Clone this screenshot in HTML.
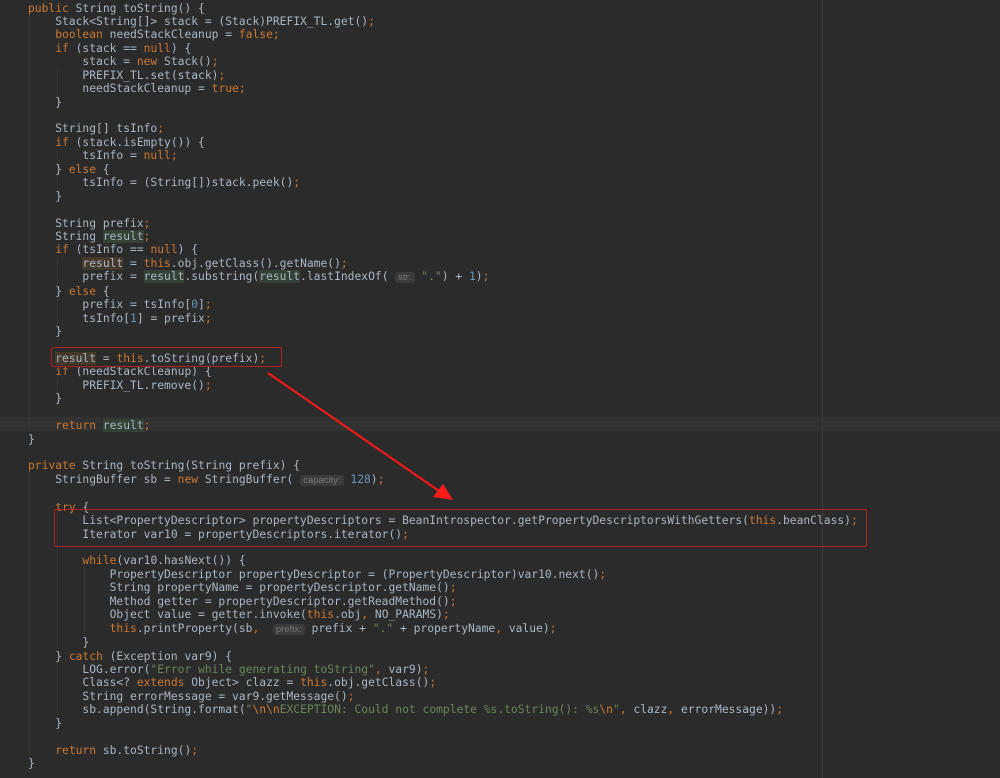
<!DOCTYPE html>
<html><head><meta charset="utf-8"><style>
html,body{margin:0;padding:0;background:#2b2b2b;width:1000px;height:778px;overflow:hidden;position:relative}
pre{margin:0;position:absolute;left:28px;top:1.5px;font-family:"DejaVu Sans Mono","Liberation Mono",monospace;font-size:11.3px;line-height:13.43px;color:#a9b7c6;white-space:pre}
.k{color:#cc7832}.s{color:#6a8759}.n{color:#6897bb}
.w{background:#45392c}.r{background:#344134}
.h{background:#3b3b3b;color:#787878;font-family:"Liberation Sans",sans-serif;font-size:9.5px;padding:0 3px;border-radius:3px}
.cur{position:absolute;left:0;width:1000px;top:417px;height:14px;background:#323232}
.vl{position:absolute;left:822px;top:0;width:1px;height:778px;background:#3a3a3a}
.g{position:absolute;width:1px;background:#373737}
.box{position:absolute;border:1.5px solid #b3201e;border-radius:2px}
</style></head><body>
<div class="cur"></div>
<div class="vl"></div>
<div class="g" style="left:57px;top:70px;height:37px"></div>
<div class="g" style="left:57px;top:150px;height:43px"></div>
<div class="g" style="left:57px;top:258px;height:70px"></div>
<div class="g" style="left:57px;top:378px;height:30px"></div>
<div class="g" style="left:29px;top:15px;height:415px"></div>
<div class="g" style="left:29px;top:472px;height:283px"></div>
<div class="g" style="left:57px;top:512px;height:135px"></div>
<div class="g" style="left:84px;top:566px;height:70px"></div>
<div class="g" style="left:57px;top:660px;height:55px"></div>
<pre><span class="k">public </span>String toString() {
    Stack&lt;String[]&gt; stack = (Stack)PREFIX_TL.get()<span class="k">;</span>
    <span class="k">boolean </span>needStackCleanup = <span class="k">false;</span>
    <span class="k">if </span>(stack == <span class="k">null</span>) {
        stack = <span class="k">new </span>Stack()<span class="k">;</span>
        PREFIX_TL.set(stack)<span class="k">;</span>
        needStackCleanup = <span class="k">true;</span>
    }

    String[] tsInfo<span class="k">;</span>
    <span class="k">if </span>(stack.isEmpty()) {
        tsInfo = <span class="k">null;</span>
    } <span class="k">else </span>{
        tsInfo = (String[])stack.peek()<span class="k">;</span>
    }

    String prefix<span class="k">;</span>
    String <span class="r">result</span><span class="k">;</span>
    <span class="k">if </span>(tsInfo == <span class="k">null</span>) {
        <span class="w">result</span> = <span class="k">this</span>.obj.getClass().getName()<span class="k">;</span>
        prefix = <span class="r">result</span>.substring(<span class="r">result</span>.lastIndexOf( <span class="h">str:</span> <span class="s">"."</span>) + <span class="n">1</span>)<span class="k">;</span>
    } <span class="k">else </span>{
        prefix = tsInfo[<span class="n">0</span>]<span class="k">;</span>
        tsInfo[<span class="n">1</span>] = prefix<span class="k">;</span>
    }

    <span class="w">result</span> = <span class="k">this</span>.toString(prefix)<span class="k">;</span>
    <span class="k">if </span>(needStackCleanup) {
        PREFIX_TL.remove()<span class="k">;</span>
    }

    <span class="k">return </span><span class="r">result</span><span class="k">;</span>
}

<span class="k">private </span>String toString(String prefix) {
    StringBuffer sb = <span class="k">new </span>StringBuffer( <span class="h">capacity:</span> <span class="n">128</span>)<span class="k">;</span>

    <span class="k">try </span>{
        List&lt;PropertyDescriptor&gt; propertyDescriptors = BeanIntrospector.getPropertyDescriptorsWithGetters(<span class="k">this</span>.beanClass)<span class="k">;</span>
        Iterator var10 = propertyDescriptors.iterator()<span class="k">;</span>

        <span class="k">while</span>(var10.hasNext()) {
            PropertyDescriptor propertyDescriptor = (PropertyDescriptor)var10.next()<span class="k">;</span>
            String propertyName = propertyDescriptor.getName()<span class="k">;</span>
            Method getter = propertyDescriptor.getReadMethod()<span class="k">;</span>
            Object value = getter.invoke(<span class="k">this</span>.obj<span class="k">, </span>NO_PARAMS)<span class="k">;</span>
            <span class="k">this</span>.printProperty(sb<span class="k">, </span> <span class="h">prefix:</span> prefix + <span class="s">"."</span> + propertyName<span class="k">, </span>value)<span class="k">;</span>
        }
    } <span class="k">catch </span>(Exception var9) {
        LOG.error(<span class="s">"Error while generating toString"</span><span class="k">, </span>var9)<span class="k">;</span>
        Class&lt;? <span class="k">extends </span>Object&gt; clazz = <span class="k">this</span>.obj.getClass()<span class="k">;</span>
        String errorMessage = var9.getMessage()<span class="k">;</span>
        sb.append(String.format(<span class="s">"<span class="k">\n\n</span>EXCEPTION: Could not complete %s.toString(): %s<span class="k">\n</span>"</span><span class="k">, </span>clazz<span class="k">, </span>errorMessage))<span class="k">;</span>
    }

    <span class="k">return </span>sb.toString()<span class="k">;</span>
}</pre>
<div class="box" style="left:51px;top:347px;width:229px;height:18px"></div>
<div class="box" style="left:54px;top:509px;width:811px;height:36px"></div>
<svg style="position:absolute;left:0;top:0" width="1000" height="778">
<line x1="268" y1="373" x2="442" y2="493" stroke="#ff1a1a" stroke-width="2"/>
<polygon points="453,500 433,497 443,484" fill="#ff1a1a"/>
</svg>
</body></html>
